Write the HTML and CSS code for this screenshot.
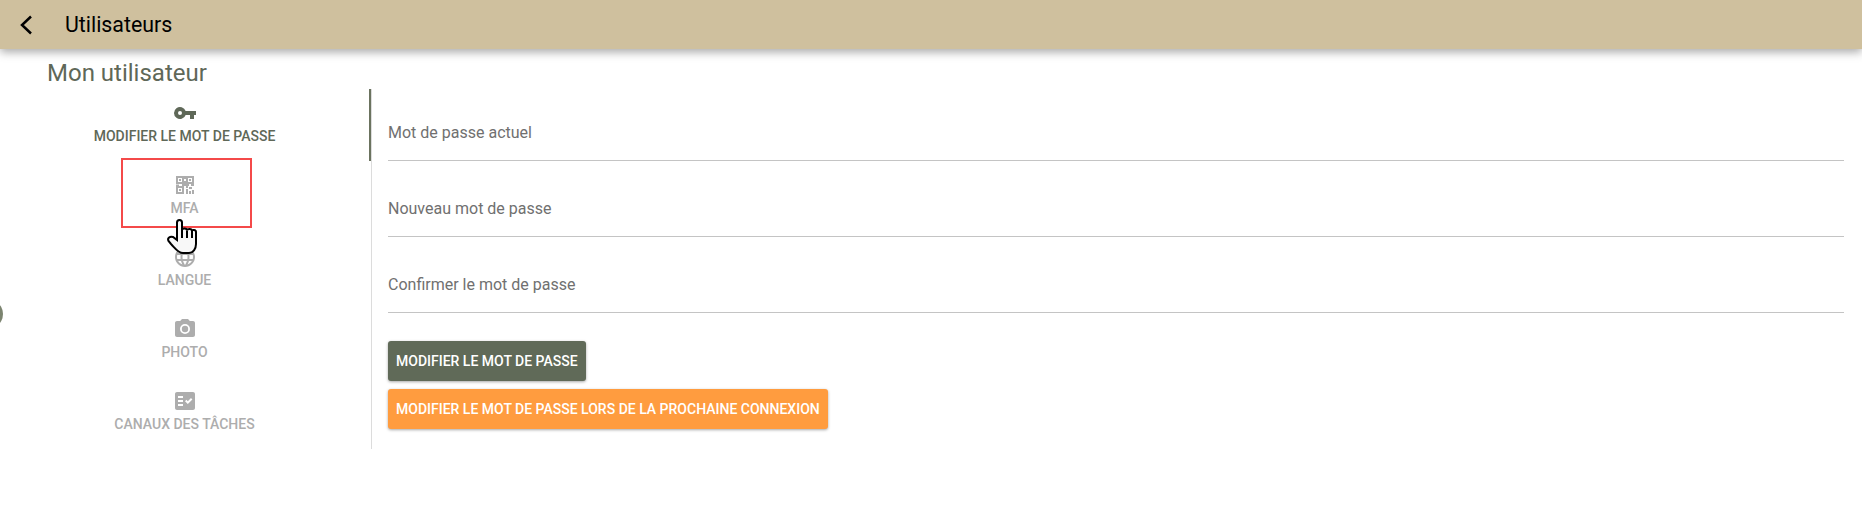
FILE: index.html
```html
<!DOCTYPE html>
<html lang="fr">
<head>
    <meta charset="UTF-8">
    <title>Utilisateurs</title>
    <link rel="stylesheet" href="styles.css">
</head>
<body>
    <header class="toolbar">
        <svg class="back-icon" viewBox="0 0 24 24"><path d="M15 3.500 6 12l9 8.500"/></svg>
        <span class="toolbar-title">Utilisateurs</span>
    </header>

    <h2 class="page-title">Mon utilisateur</h2>

    <div class="tabs-layout">
        <nav class="tabs">
            <div class="tab active">
                <svg class="tab-icon" viewBox="0 0 24 24"><path d="M12.65 10A6 6 0 1 0 12.65 14H17v4h4v-4h2v-4H12.65zM7 14a2 2 0 1 1 0-4 2 2 0 0 1 0 4z"/></svg>
                <span>Modifier le mot de passe</span>
            </div>
            <div class="tab">
                <svg class="tab-icon" viewBox="0 0 24 24"><path d="M3 3h8v8H3zM5 5v4h4V5zM13 3h8v8h-8zM15 5v4h4V5zM3 13h8v8H3zM5 15v4h4v-4z" fill-rule="evenodd"/><path d="M6 6h2v2H6zM16 6h2v2h-2zM6 16h2v2H6zM11 3h2v3h-2zM11 8h2v5H9v-2h2zM3 11.500h3V13H3zM13 11h3v2h-3zM18 11h3v2h-3zM13 13h2v2h-2zM16 14h3v2h-3zM13 16h2v5h-2zM16 18h2v3h-2zM19 17h2v4h-2z"/></svg>
                <span>MFA</span>
            </div>
            <div class="tab">
                <svg class="tab-icon" viewBox="0 0 24 24"><path d="M11.99 2C6.47 2 2 6.48 2 12s4.47 10 9.99 10C17.52 22 22 17.52 22 12S17.52 2 11.99 2zm6.93 6h-2.95a15.65 15.65 0 0 0-1.38-3.56A8.03 8.03 0 0 1 18.92 8zM12 4.04c.83 1.2 1.48 2.53 1.91 3.96h-3.82c.43-1.43 1.08-2.76 1.91-3.96zM4.26 14C4.1 13.36 4 12.69 4 12s.1-1.36.26-2h3.38c-.08.66-.14 1.32-.14 2s.06 1.34.14 2H4.26zm.82 2h2.95c.32 1.25.78 2.45 1.38 3.56A7.987 7.987 0 0 1 5.08 16zm2.95-8H5.08a7.987 7.987 0 0 1 4.33-3.56A15.65 15.65 0 0 0 8.03 8zM12 19.96c-.83-1.2-1.48-2.53-1.91-3.96h3.82c-.43 1.43-1.08 2.76-1.91 3.96zM14.34 14H9.66c-.09-.66-.16-1.32-.16-2s.07-1.35.16-2h4.68c.09.65.16 1.32.16 2s-.07 1.34-.16 2zm.25 5.56c.6-1.11 1.06-2.31 1.38-3.56h2.95a8.03 8.03 0 0 1-4.33 3.56zM16.36 14c.08-.66.14-1.32.14-2s-.06-1.34-.14-2h3.38c.16.64.26 1.31.26 2s-.1 1.36-.26 2h-3.38z"/></svg>
                <span>Langue</span>
            </div>
            <div class="tab">
                <svg class="tab-icon" viewBox="0 0 24 24"><circle cx="12" cy="12" r="3.2"/><path d="M9 2 7.170 4H4c-1.100 0-2 .9-2 2v12c0 1.100.9 2 2 2h16c1.100 0 2-.9 2-2V6c0-1.100-.9-2-2-2h-3.170L15 2H9zm3 15a5 5 0 1 1 0-10 5 5 0 0 1 0 10z"/></svg>
                <span>Photo</span>
            </div>
            <div class="tab">
                <svg class="tab-icon" viewBox="0 0 24 24"><path fill-rule="evenodd" d="M20 3H4c-1.100 0-2 .9-2 2v14c0 1.100.9 2 2 2h16c1.100 0 2-.9 2-2V5c0-1.100-.9-2-2-2zM10 17H5v-2h5v2zm0-4H5v-2h5v2zm0-4H5V7h5v2zm4.820 6L12 12.160l1.410-1.410 1.410 1.420L17.990 9l1.420 1.420L14.820 15z"/></svg>
                <span>Canaux des tâches</span>
            </div>
        </nav>

        <section class="tab-content">
            <div class="field"><label>Mot de passe actuel</label></div>
            <div class="field"><label>Nouveau mot de passe</label></div>
            <div class="field"><label>Confirmer le mot de passe</label></div>
            <div class="actions">
                <button class="btn btn-primary">Modifier le mot de passe</button>
                <button class="btn btn-warn">Modifier le mot de passe lors de la prochaine connexion</button>
            </div>
        </section>
    </div>

    <!-- annotations de la capture -->
    <div class="side-dot"></div>
    <div class="highlight-box"></div>
    <svg class="hand-cursor" viewBox="0 0 32 40">
        <path d="M12 23V5.500C12 2 17 2 17 5.500V13c0-2 5-2 5 .5 0-2 5-2 5 .5 0-1.500 4-1.500 4 1V27c0 5-3 9-7 9h-6c-5 0-8-5-12-9l-2.500-3C2 21 5 19 8 20z"/>
        <path d="M17 13v8M22 13.500V21M27 14v7"/>
    </svg>
</body>
</html>
```

FILE: styles.css
```css
* {
    box-sizing: border-box;
}
body {
    margin: 0;
    height: 520px;
    overflow: hidden;
    position: relative;
    background: #fff;
    font-family: Roboto, Arial, sans-serif;
}
.toolbar {
    height: 49px;
    background: #cfc09e;
    display: flex;
    align-items: center;
    padding-left: 16px;
    box-shadow: 0 3px 9px rgba(0, 0, 0, 0.35);
}
.back-icon {
    width: 24px;
    height: 24px;
    fill: none;
    stroke: #000;
    stroke-width: 2.5;
}
.toolbar-title {
    margin-left: 25px;
    font-size: 21.33px;
    color: #000;
}
.page-title {
    margin: 0;
    padding: 10px 0 0 47px;
    height: 40px;
    font-size: 24px;
    line-height: 28px;
    font-weight: 400;
    color: #5f6858;
}
.tabs-layout {
    display: flex;
}
.tabs {
    width: 372px;
    border-right: 1px solid #dcdcdc;
    height: 360px;
}
.tab {
    height: 72px;
    padding-bottom: 5px;
    border-right: 2px solid transparent;
    display: flex;
    flex-direction: column;
    align-items: center;
    justify-content: center;
    gap: 3px;
    color: #adadad;
    font-size: 14px;
    font-weight: 500;
    text-transform: uppercase;
}
.tab.active {
    color: #5f6858;
    border-right-color: #6b735f;
}
.tab-icon {
    width: 24px;
    height: 24px;
    fill: currentColor;
}
.tab-content {
    flex: 1;
    padding: 0 18px 0 16px;
}
.field {
    height: 76px;
    padding-top: 38px;
    border-bottom: 1px solid #c4c4c4;
    font-size: 16px;
    line-height: 20px;
    color: #707070;
}
.field:first-child {
    height: 72px;
    padding-top: 34px;
}
.actions {
    display: flex;
    flex-direction: column;
    align-items: flex-start;
    gap: 8px;
    margin-top: 28px;
}
.btn {
    height: 40px;
    padding: 0 8px;
    border: none;
    border-radius: 3px;
    color: #fff;
    font-family: inherit;
    font-size: 14px;
    font-weight: 500;
    text-transform: uppercase;
    box-shadow: 0 1px 3px rgba(0, 0, 0, 0.35);
}
.btn-primary {
    background: #606a58;
}
.btn-warn {
    background: #ff9c3f;
}
.side-dot {
    position: absolute;
    left: -9px;
    top: 304px;
    width: 12px;
    height: 20px;
    border-radius: 50%;
    background: #7c8470;
}
.highlight-box {
    position: absolute;
    left: 121px;
    top: 158px;
    width: 131px;
    height: 70px;
    border: 2px solid #f44a4a;
}
.hand-cursor {
    position: absolute;
    left: 165px;
    top: 217px;
    width: 32px;
    height: 40px;
    fill: #f8f8f8;
    stroke: #000;
    stroke-width: 2;
}
```
